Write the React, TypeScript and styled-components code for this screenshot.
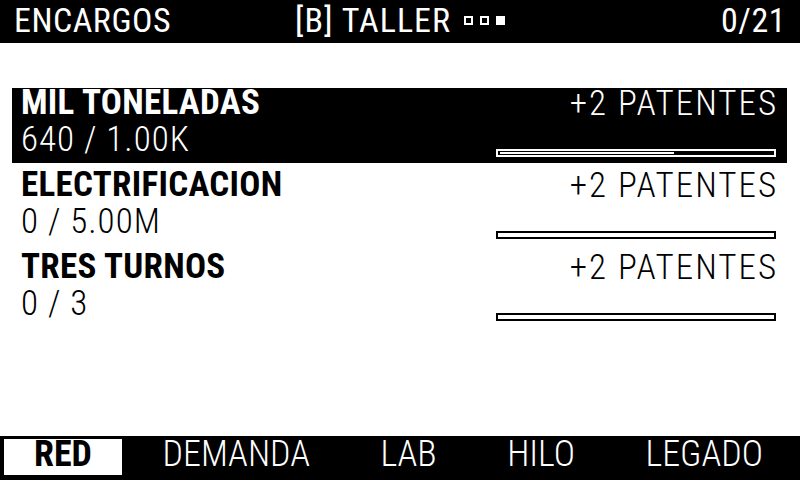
import React from "react";
import styled, { createGlobalStyle } from "styled-components";

const GlobalStyle = createGlobalStyle`
  html, body {
    margin: 0;
    padding: 0;
    background: #ffffff;
  }
  body {
    font-family: "Roboto", "Liberation Sans", sans-serif;
    font-stretch: condensed;
  }
`;

const Screen = styled.div`
  box-sizing: border-box;
  width: 800px;
  height: 480px;
  display: flex;
  flex-direction: column;
  background: #ffffff;
  color: #000000;
  overflow: hidden;
`;

const Header = styled.div`
  box-sizing: border-box;
  height: 43px;
  flex: none;
  display: grid;
  grid-template-columns: 1fr auto 1fr;
  align-items: start;
  padding: 0 14px;
  background: #000000;
  color: #ffffff;
  font-size: 34px;
  line-height: 40px;
  letter-spacing: 0.5px;
`;

const HeaderLeft = styled.div`
  justify-self: start;
`;

const HeaderCenter = styled.div`
  display: flex;
  align-items: flex-start;
  gap: 13px;
  letter-spacing: 1px;
`;

const HeaderRight = styled.div`
  justify-self: end;
`;

const Pips = styled.div`
  display: flex;
  gap: 7px;
  margin-top: 16px;
`;

const Pip = styled.span<{ $filled: boolean }>`
  box-sizing: border-box;
  width: 9px;
  height: 9px;
  border: 2px solid #ffffff;
  background: ${(p) => (p.$filled ? "#ffffff" : "#000000")};
`;

const List = styled.div`
  flex: 1;
  display: flex;
  flex-direction: column;
  gap: 7px;
  padding: 45px 13px 0 12px;
`;

const Row = styled.div<{ $selected: boolean }>`
  box-sizing: border-box;
  height: 75px;
  display: flex;
  justify-content: space-between;
  padding: 0 11px 6px 9px;
  background: ${(p) => (p.$selected ? "#000000" : "#ffffff")};
  color: ${(p) => (p.$selected ? "#ffffff" : "#000000")};
`;

const LeftCol = styled.div`
  display: flex;
  flex-direction: column;
`;

const Title = styled.div`
  font-size: 35px;
  font-weight: bold;
  line-height: 30px;
  letter-spacing: 0.3px;
`;

const Amount = styled.div`
  margin-top: 4px;
  font-size: 35px;
  font-weight: 300;
  line-height: 36px;
  letter-spacing: 1px;
`;

const RightCol = styled.div`
  display: flex;
  flex-direction: column;
  justify-content: space-between;
  align-items: flex-end;
`;

const Reward = styled.div`
  margin-right: -2px;
  font-size: 35px;
  font-weight: 300;
  line-height: 32px;
  letter-spacing: 2px;
`;

const Bar = styled.div<{ $selected: boolean }>`
  box-sizing: border-box;
  width: 280px;
  height: 8px;
  padding: 1px 2px;
  border: 2px solid ${(p) => (p.$selected ? "#ffffff" : "#000000")};
`;

const BarFill = styled.div<{ $selected: boolean }>`
  height: 2px;
  background: ${(p) => (p.$selected ? "#ffffff" : "#000000")};
`;

const Nav = styled.div`
  box-sizing: border-box;
  height: 44px;
  flex: none;
  display: flex;
  justify-content: space-between;
  padding: 3px 7px 5px 4px;
  background: #000000;
`;

const Tab = styled.div<{ $active: boolean }>`
  padding: 0 30px 6px;
  font-size: 36px;
  line-height: 30px;
  font-weight: ${(p) => (p.$active ? "bold" : 300)};
  background: ${(p) => (p.$active ? "#ffffff" : "#000000")};
  color: ${(p) => (p.$active ? "#000000" : "#ffffff")};
`;

type Order = {
  title: string;
  current: number;
  target: number;
  label: string;
};

const orders: Order[] = [
  { title: "MIL TONELADAS", current: 640, target: 1000, label: "640 / 1.00K" },
  { title: "ELECTRIFICACION", current: 0, target: 5000000, label: "0 / 5.00M" },
  { title: "TRES TURNOS", current: 0, target: 3, label: "0 / 3" },
];

const tabs = ["RED", "DEMANDA", "LAB", "HILO", "LEGADO"];

export default function App() {
  const selected = 0;
  const activeTab = 0;

  return (
    <Screen>
      <GlobalStyle />
      <Header>
        <HeaderLeft>ENCARGOS</HeaderLeft>
        <HeaderCenter>
          [B] TALLER
          <Pips>
            <Pip $filled={false} />
            <Pip $filled={false} />
            <Pip $filled={true} />
          </Pips>
        </HeaderCenter>
        <HeaderRight>0/21</HeaderRight>
      </Header>
      <List>
        {orders.map((o, i) => (
          <Row key={o.title} $selected={i === selected}>
            <LeftCol>
              <Title>{o.title}</Title>
              <Amount>{o.label}</Amount>
            </LeftCol>
            <RightCol>
              <Reward>+2 PATENTES</Reward>
              <Bar $selected={i === selected}>
                <BarFill
                  $selected={i === selected}
                  style={{ width: `${(o.current / o.target) * 100}%` }}
                />
              </Bar>
            </RightCol>
          </Row>
        ))}
      </List>
      <Nav>
        {tabs.map((t, i) => (
          <Tab key={t} $active={i === activeTab}>
            {t}
          </Tab>
        ))}
      </Nav>
    </Screen>
  );
}
